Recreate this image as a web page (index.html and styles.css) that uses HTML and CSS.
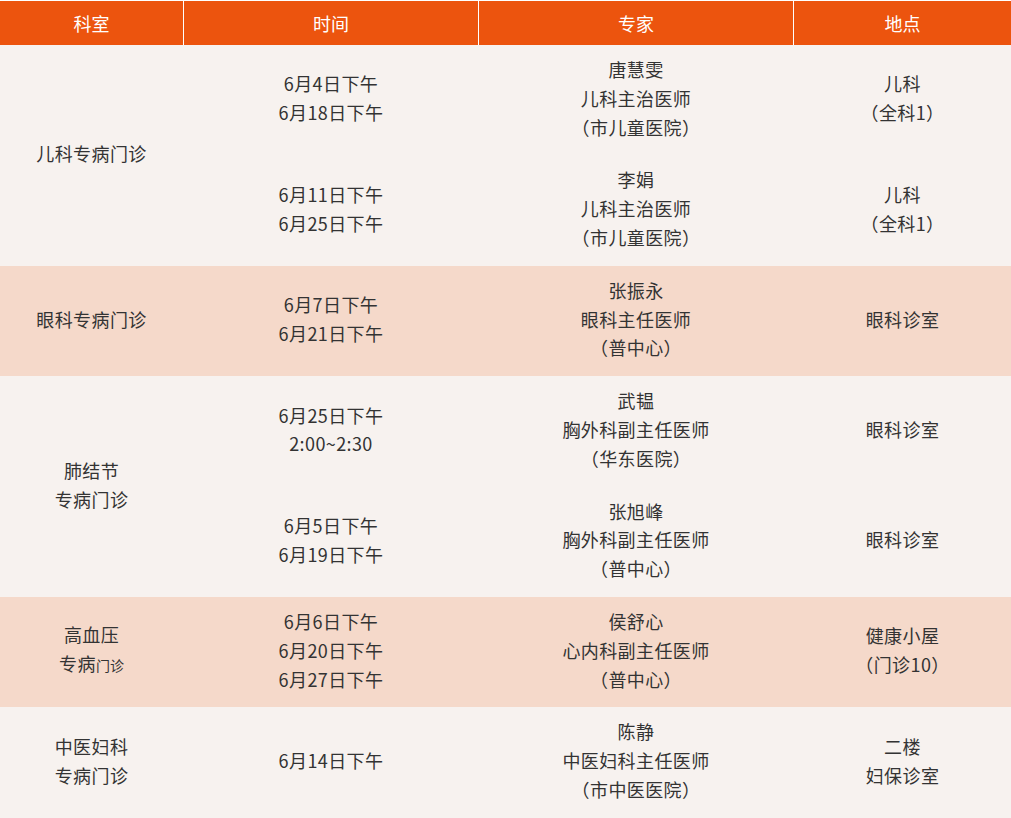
FILE: index.html
```html
<!DOCTYPE html>
<html lang="zh-CN">
<head>
<meta charset="utf-8">
<title>专病门诊安排</title>
<link rel="stylesheet" href="styles.css">
</head>
<body>
<div class="table">
  <div class="head">
    <div class="hcell">科室</div>
    <div class="hcell">时间</div>
    <div class="hcell">专家</div>
    <div class="hcell">地点</div>
  </div>

  <div class="group light two">
    <div class="cell dept span2">儿科专病门诊</div>
    <div class="cell">6月4日下午<br>6月18日下午</div>
    <div class="cell">唐慧雯<br>儿科主治医师<br>（市儿童医院）</div>
    <div class="cell">儿科<br>（全科1）</div>
    <div class="cell">6月11日下午<br>6月25日下午</div>
    <div class="cell">李娟<br>儿科主治医师<br>（市儿童医院）</div>
    <div class="cell">儿科<br>（全科1）</div>
  </div>

  <div class="group peach">
    <div class="cell dept">眼科专病门诊</div>
    <div class="cell">6月7日下午<br>6月21日下午</div>
    <div class="cell">张振永<br>眼科主任医师<br>（普中心）</div>
    <div class="cell">眼科诊室</div>
  </div>

  <div class="group light two">
    <div class="cell dept span2">肺结节<br>专病门诊</div>
    <div class="cell">6月25日下午<br>2:00~2:30</div>
    <div class="cell">武韫<br>胸外科副主任医师<br>（华东医院）</div>
    <div class="cell">眼科诊室</div>
    <div class="cell">6月5日下午<br>6月19日下午</div>
    <div class="cell">张旭峰<br>胸外科副主任医师<br>（普中心）</div>
    <div class="cell">眼科诊室</div>
  </div>

  <div class="group peach">
    <div class="cell dept"><div class="txt">高血压<br>专病<span class="small">门诊</span></div></div>
    <div class="cell">6月6日下午<br>6月20日下午<br>6月27日下午</div>
    <div class="cell">侯舒心<br>心内科副主任医师<br>（普中心）</div>
    <div class="cell">健康小屋<br>（门诊10）</div>
  </div>

  <div class="group light">
    <div class="cell dept">中医妇科<br>专病门诊</div>
    <div class="cell">6月14日下午</div>
    <div class="cell">陈静<br>中医妇科主任医师<br>（市中医医院）</div>
    <div class="cell">二楼<br>妇保诊室</div>
  </div>
</div>
</body>
</html>
```

FILE: styles.css
```css
html, body {
  margin: 0;
  padding: 0;
  background: #ffffff;
}

body {
  padding-top: 1px;
  font-family: "Noto Sans CJK SC", "Microsoft YaHei", sans-serif;
  font-size: 18px;
  color: #333333;
}

.table {
  width: 1011px;
}

.head {
  display: grid;
  grid-template-columns: 183px 294px 314px 217px;
  column-gap: 1px;
  background: #ffffff;
}

.hcell {
  background: #ec540e;
  color: #ffffff;
  height: 44px;
  display: flex;
  align-items: center;
  justify-content: center;
  font-size: 18px;
  line-height: 1;
}

.group {
  display: grid;
  grid-template-columns: 183px 294px 314px 217px;
  column-gap: 1px;
}

.light {
  background: #f7f2ef;
}

.peach {
  background: #f5d9ca;
}

.cell {
  display: flex;
  align-items: center;
  justify-content: center;
  text-align: center;
  min-height: 86.4px;
  padding: 10px 0 14px;
  line-height: 28.8px;
  letter-spacing: 0.4px;
}

.txt {
  text-align: center;
}

.span2 {
  grid-row: span 2;
}

.small {
  font-size: 14px;
  letter-spacing: 0;
}
```
